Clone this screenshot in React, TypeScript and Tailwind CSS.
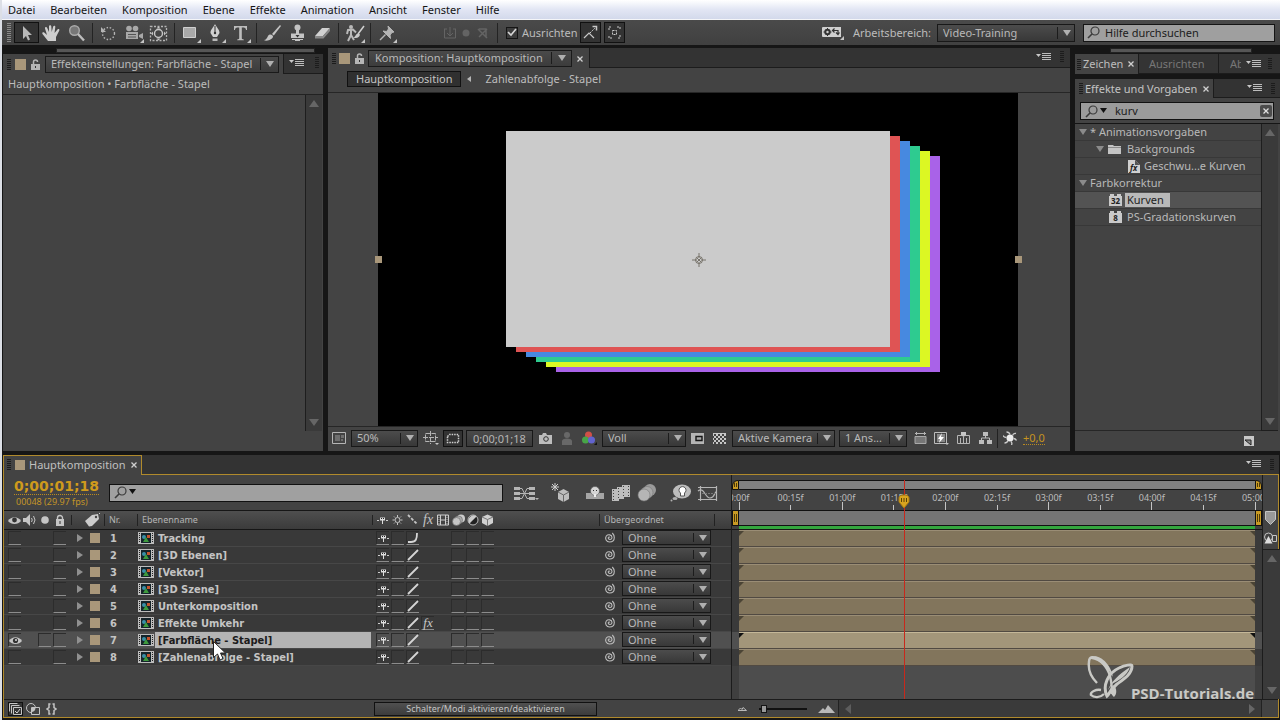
import { Fragment, type ReactNode } from "react";
import { clsx } from "clsx";

type SvgProps = { w: number; h: number; className?: string; children: ReactNode };

const Svg = ({ w, h, className, children }: SvgProps) => (
  <svg
    width={w}
    height={h}
    viewBox={`0 0 ${w} ${h}`}
    fill="none"
    aria-hidden="true"
    className={clsx("shrink-0", className)}
  >
    {children}
  </svg>
);

/* ---------- shared bits ---------- */

const Grip = ({ tall = false }: { tall?: boolean }) => (
  <Svg w={4} h={tall ? 20 : 11}>
    {Array.from({ length: tall ? 10 : 6 }, (_, i) => (
      <path key={i} d={`M0 ${i * 2 + 0.5}h4`} stroke={tall ? "#8a8a8a" : "#1c1c1c"} />
    ))}
  </Svg>
);

const PanelMenu = () => (
  <button type="button" aria-label="Bedienfeldmenü" className="shrink-0">
    <Svg w={15} h={8}>
      <path d="M0 1h5L2.500 4z" fill="#c8c8c8" />
      <path d="M6 .5h9M6 2.500h9M6 4.500h9M6 6.500h9" stroke="#bdbdbd" />
    </Svg>
  </button>
);

const Swatch = ({ size = "size-[11px]" }: { size?: string }) => (
  <span className={clsx("block shrink-0 bg-[#a9977a]", size)} />
);

const Padlock = () => (
  <Svg w={9} h={11}>
    <path d="M2.500 5V3a2 2 0 0 1 4 0" stroke="#b5b5b5" strokeWidth="1.500" />
    <path d="M0 5h9v6H0z" fill="#b5b5b5" />
    <path d="M4 7h1v2H4z" fill="#333" />
  </Svg>
);

const CloseX = () => (
  <button type="button" aria-label="Schließen" className="shrink-0">
    <Svg w={6} h={6}>
      <path d="M.5.5l5 5M5.500.5l-5 5" stroke="#d0d0d0" strokeWidth="1.300" />
    </Svg>
  </button>
);

const ArrowDown = () => (
  <Svg w={8} h={6}>
    <path d="M0 0h8L4 6z" fill="#b0b0b0" />
  </Svg>
);

const Loupe = ({ arrow = false }: { arrow?: boolean }) => (
  <Svg w={arrow ? 22 : 18} h={13}>
    <circle cx="8" cy="5" r="4" stroke="#3a3a3a" strokeWidth="1.200" />
    <path d="M5 8L1 12" stroke="#3a3a3a" strokeWidth="1.600" />
    {arrow && <path d="M15 3h7l-3.500 5z" fill="#111" />}
  </Svg>
);

const Select = ({ label, value, className }: { label: string; value: string; className?: string }) => (
  <div className={clsx("relative shrink-0", className)}>
    <select
      aria-label={label}
      defaultValue={value}
      className="block h-full w-full appearance-none border border-[#181818] bg-linear-to-b from-[#4c4c4c] to-[#383838] pl-[5px] text-[11px] leading-[14px] text-[#b9b9b9] outline-none"
    >
      <option>{value}</option>
    </select>
    <span className="pointer-events-none absolute inset-y-[3px] right-1 flex items-center border-l border-[#1c1c1c] pl-[5px]">
      <ArrowDown />
    </span>
  </div>
);

const ScrollBar = ({ className }: { className?: string }) => (
  <div
    className={clsx(
      "flex w-[17px] shrink-0 flex-col items-center justify-between border-l border-[#1e1e1e] bg-[#3a3a3a] py-[5px]",
      className,
    )}
  >
    <Svg w={10} h={7}>
      <path d="M5 0l5 7H0z" fill="#666" />
    </Svg>
    <Svg w={10} h={7}>
      <path d="M0 0h10L5 7z" fill="#666" />
    </Svg>
  </div>
);

/* ---------- menu bar and tools ---------- */

const menus = ["Datei", "Bearbeiten", "Komposition", "Ebene", "Effekte", "Animation", "Ansicht", "Fenster", "Hilfe"];

const MenuBar = () => (
  <nav className="flex h-5 items-center gap-[15px] border-b border-[#f4f5f8] bg-linear-to-b from-white via-[#e2e6f4] to-[#d3d9eb] pl-[6px] text-[11px] leading-4 text-[#151515]">
    {menus.map((m) => (
      <button key={m} type="button">
        {m}
      </button>
    ))}
  </nav>
);

const corner = <path d="M22 17v4h-4z" fill="#c4c4c4" />;

const toolGroups: { name: string; icon: ReactNode }[][] = [
  [
    {
      name: "Auswahl",
      icon: <path d="M8 4v13l3-3 2 4.500 2-1-2-4.500h4z" fill="#b9b9b9" />,
    },
    {
      name: "Hand",
      icon: (
        <path
          d="M8 19l-5.500-7c-.8-1.500.8-2.300 2-1.200L7 13 5 6.500c-.3-1.500 1.600-2 2.200-.5L9 10V4.500c0-1.600 2.200-1.600 2.300 0L11.700 10l1.500-5.500c.5-1.400 2.300-1 2.100.4L14.500 11l3-3.500c1-1 2.400-.2 1.800 1L16 15v4z"
          fill="#cfcfcf"
        />
      ),
    },
    {
      name: "Zoom",
      icon: (
        <>
          <circle cx="9.500" cy="8.500" r="4.800" fill="#777" stroke="#aaa" strokeWidth="1.400" />
          <path d="M13 12l6 6.500" stroke="#bdbdbd" strokeWidth="2.400" />
        </>
      ),
    },
  ],
  [
    {
      name: "Drehung",
      icon: (
        <>
          <circle cx="11.500" cy="11.500" r="6" stroke="#b5b5b5" strokeWidth="1.400" strokeDasharray="1.500 1.700" />
          <path d="M4 5v5h5z" fill="#b5b5b5" />
        </>
      ),
    },
    {
      name: "Kamera",
      icon: (
        <>
          <circle cx="7" cy="6.500" r="2.800" fill="#a8a8a8" />
          <circle cx="13.500" cy="6.500" r="2.800" fill="#a8a8a8" />
          <path d="M4 10h12v7H4zM17 13l4-2v6l-4-2z" fill="#a8a8a8" />
          <path d="M6 12.500h8M6 15h8" stroke="#555" />
          {corner}
        </>
      ),
    },
    {
      name: "Ausschnitt",
      icon: (
        <>
          <path d="M3.500 4.500h16v14h-16z" stroke="#b5b5b5" strokeWidth="1.300" strokeDasharray="2 1.500" />
          <circle cx="11.500" cy="11.500" r="4" stroke="#c5c5c5" strokeWidth="1.500" />
          <path d="M11.500 4.500l2 2h-4zM11.500 18.500l2-2h-4zM4 11.500l2-2v4zM19 11.500l-2-2v4z" fill="#c5c5c5" />
        </>
      ),
    },
  ],
  [
    {
      name: "Rechteck",
      icon: (
        <>
          <path d="M4.500 5.500h12v10h-12z" fill="#a9a9a9" stroke="#cfcfcf" />
          {corner}
        </>
      ),
    },
    {
      name: "Zeichenstift",
      icon: (
        <>
          <path d="M11 2c1 3 4.500 5 4.500 9l-2.500 4H9l-2.500-4C6.500 7 10 5 11 2z" fill="#d0d0d0" />
          <path d="M11 4v7" stroke="#333" />
          <circle cx="11" cy="11" r="1.200" fill="#333" />
          <path d="M8.500 16.500h5v2.500h-5z" fill="#b9b9b9" />
          {corner}
        </>
      ),
    },
    {
      name: "Text",
      icon: (
        <>
          <path d="M5 8V4h13v4h-1c-.3-2-1-2.500-4.200-2.500V16c0 1 .5 1.300 2 1.400v.8H8.200v-.8c1.500-.1 2-.4 2-1.400V5.500C7 5.500 6.300 6 6 8z" fill="#bdbdbd" />
          {corner}
        </>
      ),
    },
  ],
  [
    {
      name: "Pinsel",
      icon: (
        <>
          <path d="M19 3l-8 9 1.800 1.500L20 4z" fill="#c4c4c4" />
          <path d="M3 18c2 0 3-2 4-4s3-2 4.500-.5S11 17 8.500 18 4 19 3 18z" fill="#c4c4c4" />
        </>
      ),
    },
    {
      name: "Kopierstempel",
      icon: (
        <>
          <circle cx="11.500" cy="5.500" r="3" fill="#c4c4c4" />
          <path d="M10 8h3v3.500h5V16H5v-4.500h5z" fill="#c4c4c4" />
          <path d="M6 17.500h11M9 18.500h5" stroke="#c4c4c4" />
          <path d="M9.500 13h4l-2 2.500z" fill="#333" />
        </>
      ),
    },
    {
      name: "Radiergummi",
      icon: (
        <>
          <path d="M11 6h8l-7 8H4z" fill="#d0d0d0" />
          <path d="M4 14h8l7-8v3l-6.500 7.500H4z" fill="#888" />
        </>
      ),
    },
  ],
  [
    {
      name: "Roto-Pinsel",
      icon: (
        <>
          <circle cx="8" cy="5" r="2" fill="#b9b9b9" />
          <path d="M4 12l1-4 5-.5 3 3M8 8v5l-3 6M8 13l3 5" stroke="#b9b9b9" strokeWidth="2" />
          <path d="M21 4l-6 8" stroke="#d0d0d0" strokeWidth="1.500" />
          <path d="M15.500 11.500c-3 0-2.500 3-5 4 3 1.500 6 0 6.500-3z" fill="#c9c9c9" />
          {corner}
        </>
      ),
    },
  ],
  [
    {
      name: "Marionette",
      icon: (
        <>
          <path d="M13 4l6 6-2 .5-2 2.500.5 3.500L8 9l3.500.5 2-2.500z" fill="#b5b5b5" stroke="#b5b5b5" />
          <path d="M10.500 12.500L5 18" stroke="#b5b5b5" strokeWidth="1.500" />
          {corner}
        </>
      ),
    },
  ],
];

const Toolbar = () => (
  <div className="flex h-[25px] items-center bg-linear-to-b from-[#4a4a4a] to-[#404040] pr-[5px] pl-[5px] text-[11px] text-[#bcbcbc]">
    <Grip tall />
    <div className="ml-[3px] flex items-center">
      {toolGroups.map((group, g) => (
        <Fragment key={g}>
          {g > 0 && <span className="mx-[3px] h-5 w-px bg-[#232323]" />}
          {group.map((tool, t) => (
            <button
              key={tool.name}
              type="button"
              aria-label={tool.name}
              className={clsx(
                "flex h-[21px] w-[25px] items-center justify-center",
                g === 0 && t === 0 && "border border-[#111] bg-[#333]",
              )}
            >
              <Svg w={23} h={22}>
                {tool.icon}
              </Svg>
            </button>
          ))}
        </Fragment>
      ))}
    </div>
    <Svg w={50} h={14} className="ml-11">
      <path d="M1.500 3v9h11V3M7 1v9M4 7l3 3 3-3M1 3h3M10 3h3" stroke="#646464" />
      <circle cx="23" cy="7" r="3.500" fill="#646464" />
      <path d="M35 3l9 9M44 3l-8 8M36 3h7v8" stroke="#646464" strokeWidth="1.500" />
    </Svg>
    <span className="mr-2 ml-1 h-5 w-px bg-[#232323]" />
    <label className="flex items-center gap-1">
      <span className="relative flex size-3 items-center justify-center">
        <input
          type="checkbox"
          defaultChecked
          className="size-3 appearance-none border border-[#151515] bg-[#3c3c3c]"
        />
        <Svg w={10} h={9} className="pointer-events-none absolute">
          <path d="M1 4l3 3 5-6" stroke="#d5d5d5" strokeWidth="1.600" />
        </Svg>
      </span>
      Ausrichten
    </label>
    <button type="button" aria-label="An Kanten ausrichten" className="ml-[2px] flex h-[21px] w-[21px] items-center justify-center border border-[#111] bg-[#333]">
      <Svg w={15} h={15}>
        <path d="M1 13l5-5 5 5" stroke="#c9c9c9" strokeWidth="1.200" />
        <path d="M7 8l5-5" stroke="#c9c9c9" strokeDasharray="2 1" />
        <path d="M9.500 1.500h4v4" stroke="#c9c9c9" strokeWidth="1.500" />
      </Svg>
    </button>
    <button type="button" aria-label="An Merkmalen ausrichten" className="ml-[3px] flex h-[21px] w-[21px] items-center justify-center border border-[#111] bg-[#333]">
      <Svg w={13} h={13}>
        <path d="M1 4V1h3M9 1h3v3M12 9v3H9M4 12H1V9" stroke="#c9c9c9" strokeDasharray="2 1" />
        <path d="M4.500 4.500h4v4h-4z" stroke="#c9c9c9" strokeDasharray="2 1" />
      </Svg>
    </button>
    <div className="ml-auto flex items-center">
      <Svg w={22} h={14}>
        <path d="M0 2a1 1 0 0 1 1-1h18v10H1a1 1 0 0 1-1-1z" fill="#d0d0d0" />
        <circle cx="5.500" cy="6" r="2.200" stroke="#333" strokeWidth="2" />
        <path d="M5.500 2v8M1.500 6h8" stroke="#333" strokeDasharray="1.500 5" />
        <path d="M11 4.500h5v3M12.500 2.500l-2 2 2 2M17.500 6.500l-1.500 2-2-2" stroke="#333" strokeWidth="1.200" />
        <path d="M22 10v4h-4z" fill="#c4c4c4" />
      </Svg>
      <span className="ml-[9px]">Arbeitsbereich:</span>
      <Select label="Arbeitsbereich" value="Video-Training" className="ml-[6px] h-[18px] w-[138px]" />
      <label className="ml-2 flex h-[18px] w-[192px] items-center border border-[#151515] bg-[#9f9f9f] pl-[3px]">
        <Loupe />
        <input
          type="search"
          aria-label="Hilfe durchsuchen"
          placeholder="Hilfe durchsuchen"
          className="w-full min-w-0 bg-transparent text-[11px] leading-4 text-[#1c1c1c] outline-none placeholder:text-[#1c1c1c]"
        />
      </label>
    </div>
  </div>
);

/* ---------- effect controls ---------- */

const EffectControls = () => (
  <section className="flex w-[320px] shrink-0 flex-col">
    <div className="flex h-[6px] justify-end pr-2">
      <span className="h-[5px] w-[259px] border border-[#222] bg-[#565656]" />
    </div>
    <div className="flex min-h-0 flex-1 flex-col bg-[#434343]">
      <div className="flex h-5 items-center bg-[#333]">
        <div className="flex h-full items-center bg-[#434343] pr-1 pl-1">
          <Grip />
          <span className="ml-1">
            <Swatch />
          </span>
          <span className="mr-[5px] ml-[5px]">
            <Padlock />
          </span>
          <button
            type="button"
            className="flex h-[17px] items-center border border-[#1a1a1a] bg-linear-to-b from-[#4a4a4a] to-[#3c3c3c] pr-1 pl-[5px]"
          >
            Effekteinstellungen: Farbfläche - Stapel
            <span className="ml-2 border-l border-[#1c1c1c] py-[3px] pl-[5px]">
              <ArrowDown />
            </span>
          </button>
        </div>
        <div className="flex h-full flex-1 items-center justify-between border-b border-l border-[#1c1c1c] pr-1 pb-[2px] pl-[5px]">
          <PanelMenu />
          <Grip />
        </div>
      </div>
      <p className="flex h-5 items-center pl-[5px] text-[#bcbcbc]">Hauptkomposition • Farbfläche - Stapel</p>
      <div className="flex flex-1 border-t border-[#222]">
        <div className="flex-1" />
        <ScrollBar className="mr-px mb-5" />
      </div>
    </div>
  </section>
);

/* ---------- composition viewer ---------- */

const solids = ["#a962e8", "#dcf723", "#2ecb90", "#4789e0", "#df5454", "#cbcbcb"];

const CompositionView = () => (
  <div className="flex flex-1 justify-center overflow-hidden border-y border-[#262626] bg-[#444] pr-[2px]">
    <svg
      width="640"
      height="332"
      viewBox="0 0 640 332"
      className="shrink-0 overflow-visible"
      role="img"
      aria-label="Vorschau"
    >
      <path d="M0 0h640v340H0z" fill="#000" />
      {solids.map((color, i) => (
        <rect key={color} x={178 - i * 10} y={63 - i * 5} width="384" height="216" fill={color} />
      ))}
      <circle cx="321" cy="167" r="3.500" fill="none" stroke="#77736a" />
      <path d="M321 160v5M321 169v5M314 167h5M323 167h5M318.500 164.500l5 5M323.500 164.500l-5 5" stroke="#77736a" />
      <path d="M-3 163h7v7h-7zM637 163h7v7h-7z" fill="#a9977a" />
    </svg>
  </div>
);

const Composition = () => (
  <section className="flex min-w-0 flex-1 flex-col bg-[#434343]">
    <div className="flex h-5 items-center bg-[#333]">
      <div className="flex h-full items-center bg-[#434343] pr-[6px] pl-1">
        <Grip />
        <span className="mr-[5px] ml-[3px]">
          <Swatch />
        </span>
        <Padlock />
        <button
          type="button"
          className="ml-1 flex h-[17px] items-center border border-[#1a1a1a] bg-linear-to-b from-[#4a4a4a] to-[#3c3c3c] pr-[5px] pl-[6px]"
        >
          Komposition: Hauptkomposition
          <span className="ml-2 border-l border-[#1c1c1c] py-[3px] pl-[6px]">
            <ArrowDown />
          </span>
        </button>
        <span className="ml-[5px]">
          <CloseX />
        </span>
      </div>
      <div className="flex h-full flex-1 items-center justify-end gap-[9px] border-b border-l border-[#1c1c1c] pr-[6px] pb-[2px]">
        <PanelMenu />
        <Grip />
      </div>
    </div>
    <div className="flex h-[24px] items-center pb-[2px] pl-[19px]">
      <button type="button" className="flex h-4 items-center border border-[#111] bg-[#303030] px-2 text-[#c4c4c4]">
        Hauptkomposition
      </button>
      <Svg w={4} h={6} className="mx-[6px]">
        <path d="M4 0v6L0 3z" fill="#b5b5b5" />
      </Svg>
      <button type="button" className="ml-2 text-[#bdbdbd]">
        Zahlenabfolge - Stapel
      </button>
    </div>
    <CompositionView />
    <div className="flex h-6 items-center pb-[2px] pl-1">
      <Svg w={14} h={12}>
        <path d="M.5.500h13v11H.5z" stroke="#b5b5b5" />
        <path d="M3 3h5v6H3zM9 3h3v3H9zM9 7h2v2H9z" fill="#6f6f6f" />
      </Svg>
      <Select label="Zoom" value="50%" className="ml-[5px] h-[17px] w-[67px]" />
      <Svg w={16} h={14} className="ml-[5px]">
        <path d="M2.500 2.500h10v8h-10zM7.500 0v13M0 6.500h15" stroke="#b5b5b5" strokeDasharray="5 1" />
        <path d="M12 12h4l-2 2z" fill="#c5c5c5" />
      </Svg>
      <button type="button" aria-label="Interessenbereich" className="mr-[3px] ml-1 flex h-[17px] w-5 items-center justify-center border border-[#111] bg-[#333]">
        <Svg w={14} h={11}>
          <path d="M1.500 3.500l2-2h9v8h-11z" stroke="#d0d0d0" strokeWidth="1.500" strokeDasharray="1.500 1" />
        </Svg>
      </button>
      <button type="button" className="h-[17px] border border-[#181818] bg-linear-to-b from-[#4a4a4a] to-[#3a3a3a] px-[6px] leading-[15px] text-[#b5b5b5]">
        0;00;01;18
      </button>
      <Svg w={13} h={11} className="ml-[6px]">
        <path d="M0 2h3l1-2h3l1 2h5v9H0z" fill="#bdbdbd" />
        <circle cx="7" cy="6" r="2.300" stroke="#333" />
      </Svg>
      <Svg w={12} h={13} className="ml-[9px]">
        <circle cx="6" cy="3" r="3" fill="#686868" />
        <path d="M1 13V9c0-1.500 2-2.500 5-2.500s5 1 5 2.500v4z" fill="#686868" />
      </Svg>
      <Svg w={16} h={14} className="mr-[5px] ml-2">
        <circle cx="7.500" cy="4" r="3.500" fill="#d05048" />
        <circle cx="4.500" cy="9" r="3.500" fill="#48a548" />
        <circle cx="10.500" cy="9" r="3.500" fill="#6264cf" />
        <path d="M16 11v3h-3z" fill="#111" />
      </Svg>
      <Select label="Auflösung" value="Voll" className="h-[17px] w-[84px]" />
      <Svg w={13} h={11} className="ml-[5px]">
        <path d="M0 0h13v11H0z" fill="#b5b5b5" />
        <path d="M5 3.500h6v4H5z" fill="#aaa" stroke="#151515" strokeWidth="1.400" />
      </Svg>
      <Svg w={13} h={11} className="mr-[6px] ml-[9px]">
        <path d="M0 0h13v11H0z" fill="#c8c8c8" />
        <path d="M1 2h12M1 6h12M1 10h12" stroke="#444" strokeWidth="2" strokeDasharray="2 2" />
        <path d="M-1 4h14M-1 8h14" stroke="#444" strokeWidth="2" strokeDasharray="2 2" />
      </Svg>
      <Select label="Ansicht" value="Aktive Kamera" className="h-[17px] w-[103px]" />
      <Select label="Ansichtslayout" value="1 Ans..." className="ml-1 h-[17px] w-[68px]" />
      <Svg w={13} h={12} className="ml-[7px]">
        <path d="M1 1.500h11M2.500 0v3M10.500 0v3" stroke="#b5b5b5" />
        <path d="M1 4.500h11v7H1z" fill="#777" stroke="#aaa" />
      </Svg>
      <Svg w={15} h={13} className="ml-[7px]">
        <path d="M.5.500h12v11H.5z" stroke="#bdbdbd" />
        <path d="M3 2h8v8H3z" fill="#888" />
        <path d="M8 1L4 7h2l-1 4 5-6H7z" fill="#fff" />
        <path d="M11 11h4l-2 2z" fill="#c5c5c5" />
      </Svg>
      <Svg w={13} h={12} className="ml-2">
        <path d="M.5 3.500h12v8H.5zM3.500 6v5M6.500 5v6M9.500 6v5" stroke="#b5b5b5" />
        <path d="M4 0h5v3L6.500 5 4 3z" fill="#c5c5c5" />
      </Svg>
      <Svg w={13} h={12} className="ml-[9px]">
        <path d="M4 0h5v4H4zM0 8h5v4H0zM8 8h5v4H8z" fill="#bdbdbd" />
        <path d="M6.500 4v2M2.500 8V6h8v2" stroke="#bdbdbd" />
      </Svg>
      <span className="mx-[5px] h-[19px] w-px bg-[#222]" />
      <Svg w={14} h={14}>
        <circle cx="7" cy="7" r="3.500" fill="#eee" />
        <path
          d="M7 3.500C6.500 2 5 1 3.500 1M9.500 4.500C10 3 11 2 13 2.500M10.500 7.500c1.500 0 2.500 1 3 2M8 10.500c1 1 1 2.500.5 3.500M5 9.500c-.5 1.500-2 2.500-3.500 2.500M3.500 6.500C2 6.500.5 5.500 0 4.500"
          stroke="#ccc"
          strokeWidth="1.300"
        />
      </Svg>
      <button type="button" className="ml-[6px] border-b border-dotted border-[#b98a20] leading-[13px] text-[#c69320]">
        +0,0
      </button>
    </div>
  </section>
);

/* ---------- effects and presets ---------- */

const Twirl = () => (
  <Svg w={8} h={6}>
    <path d="M0 0h8L4 6z" fill="#8b8b8b" />
  </Svg>
);

const EffectBrick = ({ bits }: { bits: string }) => (
  <svg width="13" height="12" viewBox="0 0 13 12" className="shrink-0" aria-hidden="true">
    <path d="M0 2h1V0h4v2h3V0h4v2h1v10H0z" fill="#c9c9c9" />
    <text x="6.500" y="10" textAnchor="middle" fontSize="8" fontWeight="700" fill="#222">
      {bits}
    </text>
  </svg>
);

const presets = [
  { label: "* Animationsvorgaben", pad: "pl-1", icon: <Twirl />, gap: "gap-[3px]" },
  {
    label: "Backgrounds",
    pad: "pl-[21px]",
    gap: "gap-[6px]",
    icon: (
      <>
        <Twirl />
        <Svg w={13} h={10} className="-ml-[2px]">
          <path d="M0 1h5l1 1h7v8H0z" fill="#c4c4c4" />
          <path d="M0 3.500h13" stroke="#8a8a8a" />
        </Svg>
      </>
    ),
  },
  {
    label: "Geschwu...e Kurven",
    pad: "pl-[53px]",
    gap: "gap-1",
    icon: (
      <svg width="12" height="13" viewBox="0 0 12 13" className="shrink-0" aria-hidden="true">
        <path d="M0 0h7l5 5v8H0z" fill="#d0d0d0" />
        <path d="M7 0v5h5z" fill="#555" />
        <text x="2" y="11" fontSize="8" fontStyle="italic" fontWeight="700" fill="#222">
          fx
        </text>
      </svg>
    ),
  },
  { label: "Farbkorrektur", pad: "pl-1", icon: <Twirl />, gap: "gap-[3px]" },
  { label: "Kurven", pad: "pl-[34px]", icon: <EffectBrick bits="32" />, gap: "gap-[5px]", selected: true },
  { label: "PS-Gradationskurven", pad: "pl-[34px]", icon: <EffectBrick bits="8" />, gap: "gap-[5px]" },
];

const EffectsPanel = () => (
  <section className="flex w-[205px] shrink-0 flex-col">
    <div className="flex h-[6px] pl-[35px]">
      <span className="h-[5px] w-[142px] border border-[#222] bg-[#565656]" />
    </div>
    <div className="flex h-5 items-center bg-[#343434] text-[#777]">
      <div className="flex h-full items-center bg-[#434343] pr-1 pl-[2px] text-[#bdbdbd]">
        <Grip />
        <span className="mr-[5px] ml-[2px]">Zeichen</span>
        <CloseX />
      </div>
      <button type="button" className="h-full flex-1 border-x border-b border-[#1c1c1c] pr-1">
        Ausrichten
      </button>
      <div className="flex h-full w-[61px] items-center border-b border-[#1c1c1c] pl-[11px]">
        <button type="button" className="w-[11px] overflow-hidden text-left">
          Ab
        </button>
        <span className="mr-[7px] ml-[5px]">
          <PanelMenu />
        </span>
        <Grip />
      </div>
    </div>
    <div className="mt-[5px] flex min-h-0 flex-1 flex-col bg-[#434343]">
      <div className="flex h-[19px] items-center bg-[#333]">
        <div className="flex h-full items-center bg-[#434343] pr-1 pl-1 text-[#c4c4c4]">
          <Grip />
          <span className="mr-[6px] ml-[2px]">Effekte und Vorgaben</span>
          <CloseX />
        </div>
        <div className="flex h-full flex-1 items-center justify-end gap-[9px] border-b border-l border-[#1c1c1c] pr-[5px]">
          <PanelMenu />
          <Grip />
        </div>
      </div>
      <label className="mt-1 mr-[6px] ml-[5px] flex h-[18px] items-center border border-[#111] bg-[#9b9b9b] pr-px pl-1">
        <Loupe arrow />
        <input
          type="text"
          aria-label="Effekte suchen"
          defaultValue="kurv"
          className="ml-2 w-full min-w-0 bg-transparent text-[11px] leading-4 text-[#1c1c1c] outline-none"
        />
        <button type="button" aria-label="Suche löschen" className="flex size-3 shrink-0 items-center justify-center rounded-xs bg-[#4c4c4c]">
          <Svg w={6} h={6}>
            <path d="M.5.5l5 5M5.500.5l-5 5" stroke="#e0e0e0" strokeWidth="1.300" />
          </Svg>
        </button>
      </label>
      <div className="mt-[3px] flex flex-1 border-t border-[#151515]">
        <ul className="flex-1 border-b border-[#262626]">
          {presets.map((p) => (
            <li
              key={p.label}
              className={clsx(
                "flex h-[17px] items-center border-b border-[#383838]",
                p.pad,
                p.gap,
                p.selected && "bg-[#535353]",
              )}
            >
              {p.icon}
              <span className={clsx("leading-[14px]", p.selected ? "-ml-[2px] bg-[#b9b9b9] pr-[6px] pl-[2px] text-[#222]" : "text-[#b9b9b9]")}>
                {p.label}
              </span>
            </li>
          ))}
        </ul>
        <ScrollBar className="mr-[2px] border-b" />
      </div>
      <div className="flex h-5 items-center justify-end pr-[26px]">
        <button type="button" aria-label="Neue Animationsvorgabe">
          <Svg w={10} h={10}>
            <path d="M0 0h10v10H0z" fill="#c8c8c8" />
            <path d="M1 4h6v5z" fill="#888" stroke="#222" />
          </Svg>
        </button>
      </div>
    </div>
  </section>
);

/* ---------- timeline ---------- */

type Layer = { name: string; selected?: boolean; effects?: boolean; smooth?: boolean };

const layers: Layer[] = [
  { name: "Tracking", smooth: true },
  { name: "[3D Ebenen]" },
  { name: "[Vektor]" },
  { name: "[3D Szene]" },
  { name: "Unterkomposition" },
  { name: "Effekte Umkehr", effects: true },
  { name: "[Farbfläche - Stapel]", selected: true },
  { name: "[Zahlenabfolge - Stapel]" },
];

const Eye = () => (
  <Svg w={13} h={9}>
    <path d="M0 5c3-5 10-5 13 0-3 4-10 4-13 0z" fill="#c5c5c5" />
    <circle cx="6.500" cy="4.500" r="2.600" fill="#333" />
    <circle cx="7" cy="4" r="1" fill="#ddd" />
  </Svg>
);

const Shy = () => (
  <Svg w={11} h={8}>
    <path d="M0 4.500h2M9 4.500h2" stroke="#ccc" />
    <path d="M3 1.500h5v3H3z" fill="#e0e0e0" />
    <path d="M4 2.500h1M6 2.500h1" stroke="#222" />
    <path d="M5 4h1v4H5z" fill="#ddd" />
  </Svg>
);

const CompIcon = () => (
  <Svg w={16} h={12}>
    <path d="M0 0h16v12H0z" fill="#bdbdbd" />
    <path d="M1.500 1v10M14.500 1v10" stroke="#222" strokeDasharray="1 1" />
    <path d="M3 1h10v10H3z" fill="#15242a" />
    <circle cx="6" cy="5" r="2" fill="#3a8fa8" />
    <path d="M9 3h3v3H9z" fill="#c4542e" />
    <path d="M8 5l3 5H5z" fill="#3d9a3d" />
  </Svg>
);

const Spiral = () => (
  <Svg w={11} h={11}>
    <path
      d="M6 5.500C5.500 4.500 4 5 4.200 6.200 4.500 8 8 8 8 5.500 8 2.500 4 2 2.300 4 .5 6.500 2.500 10 5.500 10 8.500 10 10.300 8 10.300 5.500c0-2-1-3.500-2-4.500"
      stroke="#bdbdbd"
      strokeWidth="1.100"
    />
  </Svg>
);

const Well = ({ children }: { children?: ReactNode }) => (
  <span className="flex h-[14px] w-[13px] shrink-0 items-center justify-center border-t border-b border-l border-t-[#2c2c2c] border-b-[#8c8c8c] border-l-[#2c2c2c]">
    {children}
  </span>
);

const columns = ["w-[68px]", "w-[32px]", "w-[33px]", "w-[235px]", "w-[227px]", ""];

const LayerRow = ({ layer, index }: { layer: Layer; index: number }) => (
  <tr
    className={clsx(
      "h-[17px] *:h-[17px] *:border-b *:border-[#474747] *:p-0",
      layer.selected ? "bg-[#505050]" : "bg-[#393939]",
    )}
  >
    <td>
      <div className="flex items-center gap-[2px] pl-1">
        <Well>{layer.selected && <Eye />}</Well>
        <span className="w-[13px]" />
        {layer.selected ? <Well /> : <span className="w-[13px]" />}
        <Well />
      </div>
    </td>
    <td>
      <div className="flex items-center gap-[7px] pl-[5px]">
        <Svg w={6} h={8}>
          <path d="M0 0v8l6-4z" fill="#909090" />
        </Svg>
        <Swatch size="size-[10px]" />
      </div>
    </td>
    <td className="font-['DejaVu_Sans_Condensed','DejaVu_Sans',sans-serif] text-[11px] leading-[14px] font-bold text-[#c4c4c4]">
      <span className="block pt-[2px] pl-[6px]">{index + 1}</span>
    </td>
    <td>
      <div className="relative flex items-center gap-px pr-px pl-px">
        <CompIcon />
        <span
          className={clsx(
            "flex-1 pt-[2px] pl-[3px] font-['DejaVu_Sans_Condensed','DejaVu_Sans',sans-serif] text-[11px] leading-[14px] font-bold",
            layer.selected ? "bg-[#b4b4b4] text-[#1c1c1c]" : "text-[#c4c4c4]",
          )}
        >
          {layer.name}
        </span>
        {layer.selected && (
          <Svg w={14} h={20} className="absolute top-[9px] left-[76px] z-10">
            <path d="M.5.5v16l4-3.500 2.500 6 3-1.500L7.500 12h5z" fill="#fff" stroke="#222" />
          </Svg>
        )}
      </div>
    </td>
    <td>
      <div className="flex items-center gap-[2px] pl-1">
        <Well>
          <Shy />
        </Well>
        <Well />
        <Well>
          <Svg w={12} h={12}>
            <path d={layer.smooth ? "M1 10h3c5 0 6-3 6-9" : "M1 11L11 1"} stroke="#d5d5d5" strokeWidth="1.800" />
          </Svg>
        </Well>
        {layer.effects ? (
          <Well>
            <span className="font-['Liberation_Serif',serif] text-[13px] leading-3 text-[#c9c9c9] italic">fx</span>
          </Well>
        ) : (
          <span className="w-[13px]" />
        )}
        <span className="w-[13px]" />
        <Well />
        <Well />
        <Well />
      </div>
    </td>
    <td>
      <div className="flex items-center gap-[7px] pb-px pl-[5px]">
        <Spiral />
        <Select label={`Übergeordnet ${index + 1}`} value="Ohne" className="h-[15px] w-[89px]" />
      </div>
    </td>
  </tr>
);

const LayerTable = () => (
  <table className="w-full table-fixed border-separate border-spacing-0">
    <colgroup>
      {columns.map((c, i) => (
        <col key={i} className={c} />
      ))}
    </colgroup>
    <thead>
      <tr className="h-5 bg-linear-to-b from-[#505050] to-[#3a3a3a] text-[9px] leading-4 text-[#b5b5b5] *:h-5 *:border-t *:border-b *:border-[#161616] *:p-0 *:text-left *:font-normal">
        <th aria-label="Audio/Video">
          <Svg w={66} h={14} className="ml-1">
            <path d="M0 8c3-5 10-5 13 0-3 4-10 4-13 0z" fill="#c5c5c5" />
            <circle cx="6.500" cy="7" r="2.400" fill="#333" />
            <path d="M15 5h3l4-4v12l-4-4h-3z" fill="#c5c5c5" />
            <path d="M23.500 5q1.500 2 0 4M25.500 3q3 4 0 8" stroke="#c5c5c5" />
            <circle cx="37" cy="7" r="3.800" fill="#c5c5c5" />
            <path d="M49.500 7V5a2.500 2.500 0 0 1 5 0v2" stroke="#c5c5c5" strokeWidth="1.400" />
            <path d="M48 6h8v7h-8z" fill="#c5c5c5" />
            <path d="M51.500 8h1v3h-1z" fill="#333" />
            <path d="M63.500 2v10" stroke="#222" />
          </Svg>
        </th>
        <th aria-label="Etikett">
          <Svg w={31} h={14}>
            <path d="M13 8l7-6 6-1 1 5-7 7-3 .5z" fill="#ccc" />
            <circle cx="24" cy="4" r="1.200" fill="#444" />
            <path d="M27 1l1-1" stroke="#ccc" />
          </Svg>
        </th>
        <th>
          <div className="border-l border-[#222] pl-1 leading-3">Nr.</div>
        </th>
        <th>
          <div className="border-l border-[#222] pl-1 leading-3">Ebenenname</div>
        </th>
        <th aria-label="Schalter">
          <svg width="126" height="14" viewBox="0 0 126 14" fill="none" aria-hidden="true">
            <path d="M.5 2v10" stroke="#222" />
            <path d="M5 7.500h2M14 7.500h2" stroke="#ccc" />
            <path d="M8 4.500h5v3H8z" fill="#ddd" />
            <path d="M9 5.500h1M11 5.500h1" stroke="#222" />
            <path d="M10 7h1v4h-1z" fill="#ddd" />
            <circle cx="25.500" cy="7" r="2.500" stroke="#c5c5c5" />
            <path d="M25.500 2v2M25.500 10v2M20.500 7h2M28.500 7h2M22 3.500l1 1M28 9.500l1 1M29 3.500l-1 1M23 9.500l-1 1" stroke="#c5c5c5" />
            <path d="M36 2l9 9" stroke="#c5c5c5" strokeWidth="1.800" strokeDasharray="3 1.500" />
            <text x="51" y="11" fontFamily="Liberation Serif, serif" fontSize="14" fontStyle="italic" fill="#c5c5c5">
              fx
            </text>
            <path d="M65.500 2v10h11V2zM68.500 2v10M73.500 2v10M69 7h5" stroke="#ccc" />
            <path d="M67 2v10M75 2v10" stroke="#aaa" strokeDasharray="1 1" />
            <circle cx="89" cy="5.500" r="4" fill="#ccc" />
            <circle cx="86.500" cy="7" r="4" fill="#aaa" stroke="#666" strokeWidth=".6" />
            <circle cx="84.500" cy="8.500" r="4" fill="#c5c5c5" stroke="#666" strokeWidth=".6" />
            <circle cx="101" cy="7" r="5" fill="#222" stroke="#bbb" />
            <path d="M97.500 10.500a5 5 0 0 1 7-7z" fill="#ccc" />
            <path d="M110 4l5.500-2.500L121 4v6l-5.500 3-5.500-3z" fill="#d0d0d0" />
            <path d="M110 4l5.500 2.500L121 4M115.500 6.500V13" stroke="#777" />
          </svg>
        </th>
        <th>
          <div className="mr-4 border-x border-[#222] pl-1 leading-3">Übergeordnet</div>
        </th>
      </tr>
    </thead>
    <tbody>
      {layers.map((layer, i) => (
        <LayerRow key={layer.name} layer={layer} index={i} />
      ))}
    </tbody>
  </table>
);

const TimelineHead = () => (
  <div className="flex h-[35px] items-center bg-[#434343] pr-[14px] pl-[10px]">
    <div className="flex w-[95px] shrink-0 flex-col items-start pt-px">
      <button
        type="button"
        className="border-b border-dotted border-[#b98a20] font-['DejaVu_Sans',sans-serif] text-[14px] leading-[15px] font-bold text-[#cf9a1c]"
      >
        0;00;01;18
      </button>
      <span className="pl-[2px] text-[9px] leading-[13px] text-[#c29428]">00048 (29.97 fps)</span>
    </div>
    <label className="flex h-[18px] w-[394px] shrink-0 items-center border border-[#111] bg-[#a0a0a0] pl-1">
      <Loupe arrow />
      <input type="text" aria-label="Ebenen suchen" className="ml-2 w-full bg-transparent text-[11px] outline-none" />
    </label>
    <Svg w={204} h={20} className="ml-[11px]">
      {/* flowchart */}
      <path d="M0 4h6v3H0zM0 9h6v3H0zM0 14h6v3H0zM15 4h6v3h-6zM15 9h6v3h-6zM15 14h6v3h-6z" fill="#b5b5b5" />
      <path d="M6 5.500h2l2.500 5 2.500-5h2M6 10.500h9M6 15.500h2l2.500-5 2.500 5h2" stroke="#b5b5b5" />
      <path d="M21 15h4l-2 2z" fill="#b5b5b5" />
      {/* draft 3D */}
      <path d="M41 0v8M37 4h8M38 1l6 6M44 1l-6 6" stroke="#d0d0d0" />
      <path d="M44 9l5.500-3L55 9v7l-5.500 3-5.500-3z" fill="#bdbdbd" />
      <path d="M44 9l5.500 3L55 9M49.500 12v7" stroke="#666" />
      {/* shy */}
      <path d="M72 10h18v6H72z" fill="#a5a5a5" />
      <circle cx="81" cy="8" r="4.500" fill="#d5d5d5" stroke="#555" strokeWidth=".6" />
      <path d="M79 7.500h1M82 7.500h1" stroke="#333" />
      <path d="M80 11h2v3h-2z" fill="#eee" />
      {/* frame blending */}
      <path d="M98 6h7v12h-7zM103 4h7v12h-7zM108 2h8v12h-8z" fill="#bdbdbd" />
      <path d="M99.500 7v10M104.500 5v11M109.500 3v11M114.500 3v10" stroke="#444" strokeDasharray="1 2" />
      {/* motion blur */}
      <circle cx="136" cy="7" r="6" fill="#9a9a9a" />
      <circle cx="133" cy="9.500" r="6" fill="#a8a8a8" stroke="#777" strokeWidth=".6" />
      <circle cx="130" cy="12" r="6" fill="#b5b5b5" stroke="#777" strokeWidth=".6" />
      {/* brainstorm */}
      <ellipse cx="168" cy="8.500" rx="9" ry="7" fill="#bdbdbd" />
      <ellipse cx="161" cy="15.500" rx="2.500" ry="1.500" fill="#b0b0b0" />
      <circle cx="157.500" cy="17.500" r="1" fill="#b0b0b0" />
      <path d="M166.500 10a3.500 3.500 0 1 1 4 0v3h-4z" fill="#fff" stroke="#555" />
      {/* graph editor */}
      <path d="M184 4.500h19M184 16.500h19M186.500 3v15M184 8c6-5 7 7 12 7s4-6 7-7M202.500 3v15" stroke="#b5b5b5" strokeWidth="1.200" />
      <path d="M188 10.500h14" stroke="#777" strokeDasharray="2 1" />
    </Svg>
  </div>
);

const ticks = ["0:00f", "00:15f", "01:00f", "01:15f", "02:00f", "02:15f", "03:00f", "03:15f", "04:00f", "04:15f", "05:00f"];
const playhead = (48 / 150) * 100;

const RangeHandle = ({ side, round }: { side: "left" | "right"; round?: boolean }) => (
  <span
    className={clsx(
      "flex h-full w-[7px] items-center justify-center gap-px border border-[#111] bg-[#c89a24]",
      round && (side === "left" ? "rounded-tl-md" : "rounded-tr-md"),
    )}
  >
    <span className="h-3/5 w-px bg-[#4c3908]" />
    <span className="h-3/5 w-px bg-[#4c3908]" />
  </span>
);

const TimeGraph = () => (
  <div className="relative flex min-w-0 flex-1 flex-col overflow-hidden border-l border-[#1c1c1c] bg-[#3f3f3f]">
    <div className="h-[5px] bg-[#434343]" />
    <div className="flex h-[10px]">
      <RangeHandle side="left" round />
      <span className="flex-1 border-y border-[#111] bg-[#808080]" />
      <RangeHandle side="right" round />
    </div>
    <div className="h-5 bg-[#434343] px-[7px]">
      <div className="relative h-full">
        {ticks.map((t, i) => (
          <div
            key={t}
            className="absolute inset-y-0 flex w-10 -translate-x-1/2 flex-col items-center justify-between text-[9px] leading-[15px] text-[#bdbdbd]"
            style={{ left: `${i * 10}%` }}
          >
            {t}
            <span className={clsx("absolute bottom-0 w-px bg-[#c4c4c4]", i % 2 ? "h-[5px]" : "h-2")} />
          </div>
        ))}
      </div>
    </div>
    <div className="flex h-4">
      <RangeHandle side="left" />
      <span className="flex-1 border-y border-[#111] bg-[#757575]" />
      <RangeHandle side="right" />
    </div>
    <div className="h-1 border-b border-[#161616] px-[7px]">
      <div className="h-[3px] bg-[#33a63e]" />
    </div>
    {layers.map((layer) => (
      <div key={layer.name} className={clsx("h-[17px] px-[7px]", layer.selected ? "bg-[#505050]" : "bg-[#3a3a3a]")}>
        <div
          className={clsx(
            "flex h-full justify-between border-t border-b border-b-[#514a42]",
            layer.selected ? "border-t-[#c4b798] bg-[#a3967a]" : "border-t-[#9a8d75] bg-[#82755c]",
          )}
        >
          <Svg w={5} h={5}>
            <path d="M0 0h5L0 5z" fill={layer.selected ? "#111" : "#4b4435"} />
          </Svg>
          <Svg w={5} h={5}>
            <path d="M0 0h5v5z" fill={layer.selected ? "#111" : "#4b4435"} />
          </Svg>
        </div>
      </div>
    ))}
    <div className="flex-1 px-[7px]">
      <div className="h-full bg-[#4d4d4d]" />
    </div>

    {/* current time indicator */}
    <div className="pointer-events-none absolute inset-x-[7px] top-[5px] bottom-0">
      <div className="absolute inset-y-0 flex w-3 -translate-x-1/2 justify-center" style={{ left: `${playhead}%` }}>
        <span className="h-full w-px bg-[#c8281c]" />
        <Svg w={12} h={15} className="absolute top-[14px]">
          <path d="M1 4q0-3 5-3t5 3v4l-5 6-5-6z" fill="#d9a41f" stroke="#a87b12" />
          <path d="M3.500 4v4M6 4v4M8.500 4v4" stroke="#5a4208" />
        </Svg>
      </div>
    </div>

    {/* brand mark */}
    <div className="pointer-events-none absolute right-2 -bottom-1 flex items-end">
      <Svg w={48} h={44} className="-mr-1 mb-1">
        <path
          d="M14 35C9 34 3 37 4 40c3 3 9 3 13-1M10 28C4 22 1 14 2 7c0-6 5-6 10-2 9 7 13 16 13 34"
          stroke="#c9c9c5"
          strokeWidth="2.400"
        />
        <path d="M4 2c8-4 20 7 22 20C21 13 13 5 4 4z" fill="#c9c9c5" />
        <path
          d="M20 41c-5-10 1-23 12-28 6-3 13-4 13-2 0 8-8 13-15 18-5 4-7 7-9 11z"
          stroke="#c9c9c5"
          strokeWidth="3"
        />
        <path d="M21 35c3-8 11-16 22-23-3 9-11 13-18 17zM27 30c3 4 3 9 0 12-4-3-4-7 0-12z" fill="#c9c9c5" />
      </Svg>
      <span className="font-['Open_Sans',sans-serif] text-[15px] leading-5 font-bold text-[#c9c9c5]">
        PSD-Tutorials.de
      </span>
    </div>
  </div>
);

const Mountains = ({ big = false }: { big?: boolean }) =>
  big ? (
    <Svg w={17} h={8}>
      <path d="M0 8l5-5 2 2 3-5 7 8z" fill="#b9b9b9" />
    </Svg>
  ) : (
    <Svg w={9} h={4}>
      <path d="M0 3.500L2.500 1 4 2.500 5 .5l3.500 3z" stroke="#b9b9b9" />
    </Svg>
  );

const TimelineFooter = () => (
  <div className="flex h-[18px] items-center border-t border-[#1c1c1c] bg-[#434343]">
    <div className="flex w-[728px] shrink-0 items-center pl-1">
      <button type="button" aria-label="Ebenenschalter" className="border border-[#111] bg-[#333]">
        <Svg w={13} h={12}>
          <path d="M.5 8.500v-8h8M2.500 10.500v-8h8" stroke="#c4c4c4" />
          <path d="M4.500 4.500h8v7h-8z" stroke="#c4c4c4" />
          <path d="M6 8l2 2 3-4" stroke="#d5d5d5" />
        </Svg>
      </button>
      <button type="button" aria-label="Transfermodi" className="ml-[3px]">
        <Svg w={14} h={12}>
          <circle cx="5" cy="5" r="4.500" stroke="#c4c4c4" />
          <path d="M5.500 4.500h8v7h-8z" fill="#434343" stroke="#c4c4c4" />
          <path d="M6 5h3.500a4.500 4.500 0 0 1-3.500 4z" fill="#c4c4c4" />
        </Svg>
      </button>
      <button type="button" aria-label="In/Out" className="ml-[6px]">
        <Svg w={11} h={12}>
          <path d="M4.500 1H3v3.500L1 6l2 1.500V11h1.500M6.500 1H8v3.500L10 6 8 7.500V11H6.500" stroke="#c4c4c4" strokeWidth="1.500" />
        </Svg>
      </button>
      <button
        type="button"
        className="mr-[135px] ml-auto h-[14px] w-[223px] border border-[#111] bg-linear-to-b from-[#505050] to-[#3c3c3c] text-[9px] leading-3 text-[#c4c4c4]"
      >
        Schalter/Modi aktivieren/deaktivieren
      </button>
    </div>
    <div className="flex flex-1 items-center pl-[6px]">
      <Mountains />
      <input
        type="range"
        aria-label="Zeitzoom"
        defaultValue="4"
        className="mr-[11px] ml-3 h-3 w-[48px] appearance-none bg-transparent [&::-webkit-slider-runnable-track]:h-[2px] [&::-webkit-slider-runnable-track]:bg-[#111] [&::-webkit-slider-thumb]:-mt-[3px] [&::-webkit-slider-thumb]:h-2 [&::-webkit-slider-thumb]:w-[6px] [&::-webkit-slider-thumb]:appearance-none [&::-webkit-slider-thumb]:border [&::-webkit-slider-thumb]:border-[#151515] [&::-webkit-slider-thumb]:bg-[#999]"
      />
      <Mountains big />
      <div className="ml-[3px] flex h-[17px] flex-1 items-center justify-between border-x border-[#222] bg-[#3a3a3a] px-[6px]">
        <Svg w={6} h={10}>
          <path d="M6 0v10L0 5z" fill="#5d5d5d" />
        </Svg>
        <Svg w={6} h={10}>
          <path d="M0 0v10l6-5z" fill="#666" />
        </Svg>
      </div>
      <span className="w-4" />
    </div>
  </div>
);

const Timeline = () => (
  <section className="mx-px mb-[2px] flex flex-col">
    <div className="flex h-5 items-stretch">
      <div className="flex items-center border-x border-t border-[#b08a2c] bg-[#434343] pr-1 pb-[2px] pl-[3px]">
        <Grip />
        <span className="mr-1 ml-1">
          <Swatch size="size-[10px]" />
        </span>
        <span className="mr-[6px] text-[#c0c0c0]">Hauptkomposition</span>
        <CloseX />
      </div>
      <div className="flex flex-1 items-center justify-end gap-[9px] border-b border-[#b08a2c] bg-[#333] pr-[5px] pb-px">
        <PanelMenu />
        <Grip />
      </div>
    </div>
    <div className="flex flex-col border-x border-b border-[#b08a2c] bg-[#434343]">
      <div className="flex h-[224px]">
        <div className="w-[727px] shrink-0">
          <TimelineHead />
          <LayerTable />
        </div>
        <TimeGraph />
        <div className="flex w-4 shrink-0 flex-col items-center border-l border-[#1c1c1c] pt-9">
          <Svg w={11} h={14}>
            <path d="M.5.500h10v8l-5 5-5-5z" fill="#999" stroke="#c4c4c4" />
          </Svg>
          <Svg w={13} h={12} className="mt-[7px]">
            <path d="M8.500 3.500h4v6h-4z" stroke="#c4c4c4" />
            <circle cx="4.500" cy="5" r="4" stroke="#c4c4c4" />
            <path d="M4.500 4l4 7.500h-8z" fill="#ddd" />
          </Svg>
          <ScrollBar className="mt-[5px] flex-1 self-stretch border-t border-l-0" />
        </div>
      </div>
      <TimelineFooter />
    </div>
  </section>
);

export default function App() {
  return (
    <div className="flex min-h-screen min-w-[1280px] flex-col border-l-2 border-[#dcdfe6] bg-[#161616] font-['Noto_Sans',sans-serif] text-[11px] leading-4 text-[#b9b9b9]">
      <MenuBar />
      <Toolbar />
      <main className="mt-[3px] mb-1 flex flex-1 gap-[5px] pl-px">
        <EffectControls />
        <Composition />
        <EffectsPanel />
      </main>
      <Timeline />
    </div>
  );
}
